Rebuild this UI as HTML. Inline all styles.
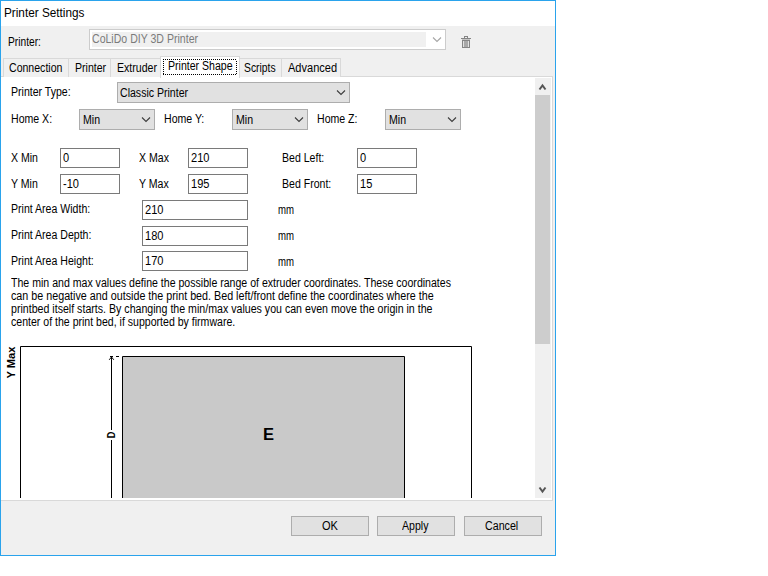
<!DOCTYPE html>
<html><head><meta charset="utf-8">
<style>
html,body{margin:0;padding:0;background:#fff;width:768px;height:576px;overflow:hidden;}
body{font-family:"Liberation Sans",sans-serif;font-size:12px;color:#000;position:relative;}
.a{position:absolute;box-sizing:border-box;}
.t{position:absolute;white-space:nowrap;line-height:12px;height:12px;transform-origin:0 0;transform:scaleX(.88);}
#win{left:0;top:0;width:556px;height:556px;border:1px solid #2aa3ec;background:#f0f0f0;}
#title{left:1px;top:1px;width:554px;height:25px;background:#fff;}
.combo{background:#e1e1e1;border:1px solid #adadad;}
.tb{background:#fff;border:1px solid #7a7a7a;}
.btn{background:#e1e1e1;border:1px solid #adadad;}
.tab{position:absolute;top:58px;height:19px;border:1px solid #d9d9d9;border-bottom:none;background:#f0f0f0;box-sizing:border-box;}
</style></head>
<body>
<div id="win" class="a"></div>
<div id="title" class="a"></div>
<div class="t" style="left:4px;top:7px;transform:scaleX(.98);">Printer Settings</div>

<!-- printer combo row -->
<div class="t" style="left:8px;top:36px;transform:scaleX(.85);">Printer:</div>
<div class="a" style="left:89px;top:29px;width:357px;height:21px;background:#fff;border:1px solid #cccccc;"></div>
<div class="a" style="left:92px;top:32px;width:334px;height:15px;background:#f0f0f0;"></div>
<div class="t" style="left:92px;top:33px;color:#7b7b7b;">CoLiDo DIY 3D Printer</div>

<!-- tab panel -->
<div class="a" style="left:1px;top:76px;width:552px;height:425px;background:#fff;border:1px solid #d9d9d9;border-left:none;"></div>

<!-- tabs -->
<div class="tab" style="left:3px;width:66px;"></div>
<div class="tab" style="left:68px;width:43px;"></div>
<div class="tab" style="left:110px;width:52px;"></div>
<div class="tab" style="left:239px;width:43px;"></div>
<div class="tab" style="left:281px;width:60px;"></div>
<div class="a" style="left:160px;top:56px;width:80px;height:22px;background:#fff;border:1px solid #d9d9d9;border-bottom:none;"></div>
<div class="t" style="left:9px;top:62px;">Connection</div>
<div class="t" style="left:75px;top:62px;">Printer</div>
<div class="t" style="left:117px;top:62px;">Extruder</div>
<div class="t" style="left:168px;top:60px;">Printer Shape</div>
<div class="t" style="left:244px;top:62px;transform:scaleX(.86);">Scripts</div>
<div class="t" style="left:288px;top:62px;transform:scaleX(.92);">Advanced</div>

<!-- content -->
<div class="t" style="left:11px;top:86px;">Printer Type:</div>
<div class="a combo" style="left:117px;top:82px;width:233px;height:21px;"></div>
<div class="t" style="left:120px;top:87px;">Classic Printer</div>

<div class="t" style="left:11px;top:113px;">Home X:</div>
<div class="a combo" style="left:79px;top:109px;width:76px;height:21px;"></div>
<div class="t" style="left:83px;top:114px;">Min</div>
<div class="t" style="left:164px;top:113px;">Home Y:</div>
<div class="a combo" style="left:232px;top:109px;width:76px;height:21px;"></div>
<div class="t" style="left:236px;top:114px;">Min</div>
<div class="t" style="left:317px;top:113px;">Home Z:</div>
<div class="a combo" style="left:385px;top:109px;width:76px;height:21px;"></div>
<div class="t" style="left:389px;top:114px;">Min</div>

<div class="t" style="left:11px;top:152px;">X Min</div>
<div class="a tb" style="left:60px;top:148px;width:60px;height:20px;"></div>
<div class="t" style="left:63px;top:152px;transform:scaleX(.92);">0</div>
<div class="t" style="left:139px;top:152px;">X Max</div>
<div class="a tb" style="left:188px;top:148px;width:60px;height:20px;"></div>
<div class="t" style="left:191px;top:152px;transform:scaleX(.92);">210</div>
<div class="t" style="left:282px;top:152px;">Bed Left:</div>
<div class="a tb" style="left:357px;top:148px;width:60px;height:20px;"></div>
<div class="t" style="left:360px;top:152px;transform:scaleX(.92);">0</div>

<div class="t" style="left:11px;top:178px;">Y Min</div>
<div class="a tb" style="left:60px;top:174px;width:60px;height:20px;"></div>
<div class="t" style="left:63px;top:178px;transform:scaleX(.92);">-10</div>
<div class="t" style="left:139px;top:178px;">Y Max</div>
<div class="a tb" style="left:188px;top:174px;width:60px;height:20px;"></div>
<div class="t" style="left:191px;top:178px;transform:scaleX(.92);">195</div>
<div class="t" style="left:282px;top:178px;">Bed Front:</div>
<div class="a tb" style="left:357px;top:174px;width:60px;height:20px;"></div>
<div class="t" style="left:360px;top:178px;transform:scaleX(.92);">15</div>

<div class="t" style="left:11px;top:203px;">Print Area Width:</div>
<div class="a tb" style="left:142px;top:200px;width:106px;height:20px;"></div>
<div class="t" style="left:145px;top:204px;transform:scaleX(.92);">210</div>
<div class="t" style="left:278px;top:204px;transform:scaleX(.8);">mm</div>
<div class="t" style="left:11px;top:229px;">Print Area Depth:</div>
<div class="a tb" style="left:142px;top:226px;width:106px;height:20px;"></div>
<div class="t" style="left:145px;top:230px;transform:scaleX(.92);">180</div>
<div class="t" style="left:278px;top:230px;transform:scaleX(.8);">mm</div>
<div class="t" style="left:11px;top:255px;">Print Area Height:</div>
<div class="a tb" style="left:142px;top:251px;width:106px;height:20px;"></div>
<div class="t" style="left:145px;top:255px;transform:scaleX(.92);">170</div>
<div class="t" style="left:278px;top:256px;transform:scaleX(.8);">mm</div>

<div class="t" style="left:11px;top:277px;transform:scaleX(.881);">The min and max values define the possible range of extruder coordinates. These coordinates</div>
<div class="t" style="left:11px;top:290px;transform:scaleX(.895);">can be negative and outside the print bed. Bed left/front define the coordinates where the</div>
<div class="t" style="left:11px;top:303px;transform:scaleX(.885);">printbed itself starts. By changing the min/max values you can even move the origin in the</div>
<div class="t" style="left:11px;top:316px;">center of the print bed, if supported by firmware.</div>

<!-- scrollbar -->
<div class="a" style="left:535px;top:78px;width:16px;height:420px;background:#f0f0f0;"></div>
<div class="a" style="left:535px;top:95px;width:15px;height:249px;background:#cdcdcd;"></div>


<!-- overlay icons & diagram -->
<svg class="a" style="left:0;top:0;" width="768" height="576" viewBox="0 0 768 576">
 <g fill="none" stroke="#3c3c3c" stroke-width="1.1">
  <polyline points="337,90.5 341,94.5 345,90.5"/>
  <polyline points="142,117.5 146,121.5 150,117.5"/>
  <polyline points="295,117.5 299,121.5 303,117.5"/>
  <polyline points="448,117.5 452,121.5 456,117.5"/>
 </g>
 <polyline points="433,37.5 437,41.5 441,37.5" fill="none" stroke="#a6a6a6" stroke-width="1.1"/>
 <g fill="none" stroke="#555" stroke-width="2">
  <polyline points="539.5,89.5 542.5,85.5 545.5,89.5"/>
  <polyline points="539.5,487.5 542.5,491.5 545.5,487.5"/>
 </g>
 <path fill="#000" d="M163 59h1v1h-1zM163 74h1v1h-1zM165 59h1v1h-1zM165 74h1v1h-1zM167 59h1v1h-1zM167 74h1v1h-1zM169 59h1v1h-1zM169 74h1v1h-1zM171 59h1v1h-1zM171 74h1v1h-1zM173 59h1v1h-1zM173 74h1v1h-1zM175 59h1v1h-1zM175 74h1v1h-1zM177 59h1v1h-1zM177 74h1v1h-1zM179 59h1v1h-1zM179 74h1v1h-1zM181 59h1v1h-1zM181 74h1v1h-1zM183 59h1v1h-1zM183 74h1v1h-1zM185 59h1v1h-1zM185 74h1v1h-1zM187 59h1v1h-1zM187 74h1v1h-1zM189 59h1v1h-1zM189 74h1v1h-1zM191 59h1v1h-1zM191 74h1v1h-1zM193 59h1v1h-1zM193 74h1v1h-1zM195 59h1v1h-1zM195 74h1v1h-1zM197 59h1v1h-1zM197 74h1v1h-1zM199 59h1v1h-1zM199 74h1v1h-1zM201 59h1v1h-1zM201 74h1v1h-1zM203 59h1v1h-1zM203 74h1v1h-1zM205 59h1v1h-1zM205 74h1v1h-1zM207 59h1v1h-1zM207 74h1v1h-1zM209 59h1v1h-1zM209 74h1v1h-1zM211 59h1v1h-1zM211 74h1v1h-1zM213 59h1v1h-1zM213 74h1v1h-1zM215 59h1v1h-1zM215 74h1v1h-1zM217 59h1v1h-1zM217 74h1v1h-1zM219 59h1v1h-1zM219 74h1v1h-1zM221 59h1v1h-1zM221 74h1v1h-1zM223 59h1v1h-1zM223 74h1v1h-1zM225 59h1v1h-1zM225 74h1v1h-1zM227 59h1v1h-1zM227 74h1v1h-1zM229 59h1v1h-1zM229 74h1v1h-1zM231 59h1v1h-1zM231 74h1v1h-1zM233 59h1v1h-1zM233 74h1v1h-1zM235 59h1v1h-1zM235 74h1v1h-1zM163 61h1v1h-1zM236 61h1v1h-1zM163 63h1v1h-1zM236 63h1v1h-1zM163 65h1v1h-1zM236 65h1v1h-1zM163 67h1v1h-1zM236 67h1v1h-1zM163 69h1v1h-1zM236 69h1v1h-1zM163 71h1v1h-1zM236 71h1v1h-1zM163 73h1v1h-1zM236 73h1v1h-1z"/>
 <!-- trash -->
 <g fill="#858585">
  <rect x="464" y="36" width="4" height="1"/>
  <rect x="464" y="37" width="1" height="1"/><rect x="467" y="37" width="1" height="1"/>
  <rect x="461" y="38" width="10" height="1"/>
  <rect x="462" y="39" width="8" height="1" fill="#c4c4c4"/>
  <rect x="462" y="40" width="8" height="8"/>
  <rect x="463" y="41" width="1" height="6" fill="#e2e2e2"/>
  <rect x="468" y="41" width="1" height="6" fill="#e2e2e2"/>
  <rect x="464" y="41" width="4" height="6" fill="#a8a8a8"/>
 </g>
 <!-- diagram -->
 <g fill="none" stroke="#000" stroke-width="1">
  <polyline points="20.5,498 20.5,346.5 471.5,346.5 471.5,498"/>
  <rect x="123" y="357" width="281" height="141" fill="#c9c9c9" stroke="none"/>
  <polyline points="122.5,498 122.5,356.5 404.5,356.5 404.5,498"/>
  <line x1="111.5" y1="357" x2="111.5" y2="430"/>
  <line x1="111.5" y1="440" x2="111.5" y2="498"/>
  <line x1="110" y1="356.5" x2="113" y2="356.5"/>
  <line x1="116" y1="356.5" x2="119" y2="356.5"/>
  <polyline points="109.2,359.8 111.5,357 113.8,359.8"/>
 </g>
 <text x="15" y="378.5" transform="rotate(-90 15 378.5)" font-family="Liberation Sans" font-weight="bold" font-size="11.5" textLength="32" lengthAdjust="spacingAndGlyphs" fill="#000">Y Max</text>
 <text x="114.6" y="438.3" transform="rotate(-90 114.6 438.3)" font-family="Liberation Sans" font-weight="bold" font-size="10.5" textLength="6.6" lengthAdjust="spacingAndGlyphs" fill="#000">D</text>
 <text x="263" y="440" font-family="Liberation Sans" font-weight="bold" font-size="16.5" fill="#000">E</text>
</svg>

<!-- buttons -->
<div class="a btn" style="left:291px;top:516px;width:78px;height:20px;"></div>
<div class="t" style="left:321.5px;top:520px;transform:scaleX(.92);">OK</div>
<div class="a btn" style="left:377px;top:516px;width:78px;height:20px;"></div>
<div class="t" style="left:402px;top:520px;">Apply</div>
<div class="a btn" style="left:464px;top:516px;width:78px;height:20px;"></div>
<div class="t" style="left:485px;top:520px;transform:scaleX(.89);">Cancel</div>
</body></html>
